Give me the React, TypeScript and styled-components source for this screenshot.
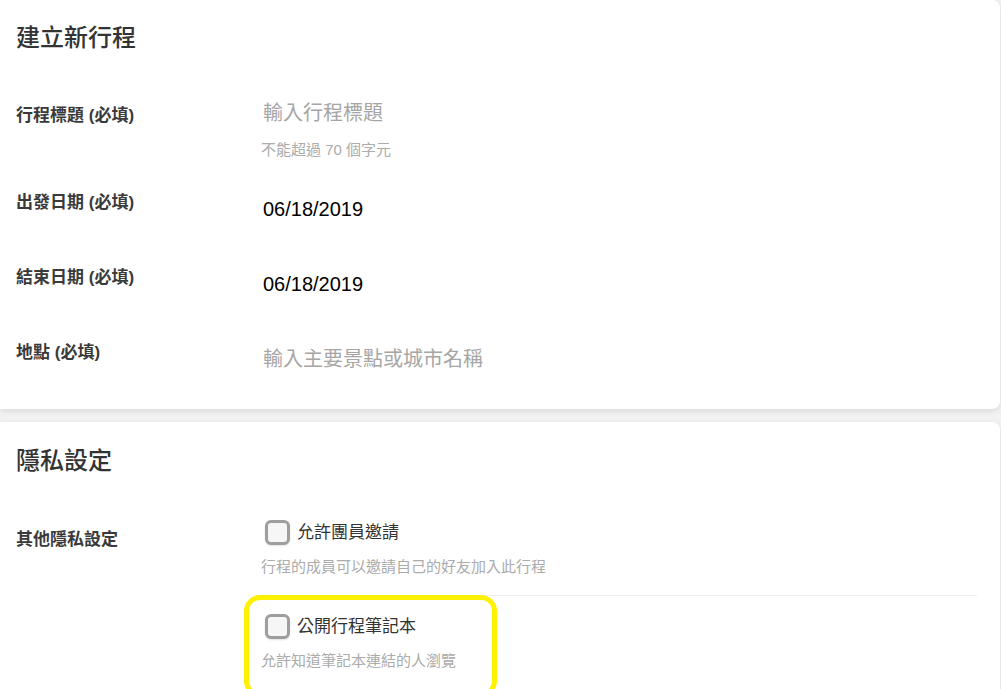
import styled, { createGlobalStyle } from 'styled-components';

const GlobalStyle = createGlobalStyle`
  html, body {
    margin: 0;
    padding: 0;
    background: #f2f2f2;
  }
  * {
    box-sizing: border-box;
  }
`;

const FONT = `"Liberation Sans", "Noto Sans CJK TC", Arial, sans-serif`;

type Field = {
  label: string;
  value: string;
  placeholder?: boolean;
  hint?: string;
  first?: boolean;
};

const fields: Field[] = [
  { label: '行程標題 (必填)', value: '輸入行程標題', placeholder: true, hint: '不能超過 70 個字元', first: true },
  { label: '出發日期 (必填)', value: '06/18/2019' },
  { label: '結束日期 (必填)', value: '06/18/2019' },
  { label: '地點 (必填)', value: '輸入主要景點或城市名稱', placeholder: true },
];

const privacyOptions = [
  { title: '允許團員邀請', desc: '行程的成員可以邀請自己的好友加入此行程', highlight: false },
  { title: '公開行程筆記本', desc: '允許知道筆記本連結的人瀏覽', highlight: true },
];

export default function App() {
  return (
    <Page>
      <GlobalStyle />
      {/* 基本資料 */}
      <Card>
        <CardTitle>建立新行程</CardTitle>
        {fields.map((f) => (
          <FormRow key={f.label} $first={f.first}>
            <Label>{f.label}</Label>
            <ValueCell $first={f.first}>
              <InputText $placeholder={f.placeholder}>{f.value}</InputText>
              {f.hint && <Hint>{f.hint}</Hint>}
            </ValueCell>
          </FormRow>
        ))}
      </Card>

      {/* 隱私設定 */}
      <Card $gap>
        <CardTitle $tight>隱私設定</CardTitle>
        <FormRow>
          <Label $offset>其他隱私設定</Label>
          <OptionList>
            {privacyOptions.map((o) => (
              <Option key={o.title} $highlight={o.highlight}>
                <OptionHead>
                  <Checkbox />
                  <OptionTitle>{o.title}</OptionTitle>
                </OptionHead>
                <Hint $small>{o.desc}</Hint>
              </Option>
            ))}
          </OptionList>
        </FormRow>
      </Card>
    </Page>
  );
}

const Page = styled.div`
  width: 100%;
  min-height: 100vh;
  padding-right: 1px;
  font-family: ${FONT};
`;

const Card = styled.section<{ $gap?: boolean }>`
  background: #ffffff;
  border-radius: 0 8px 8px 0;
  box-shadow: 0 2px 6px rgba(0, 0, 0, 0.1);
  padding: ${({ $gap }) => ($gap ? '23px 23px 40px 16px' : '22px 23px 1px 16px')};
  margin-top: ${({ $gap }) => ($gap ? '13px' : '0')};
`;

const CardTitle = styled.h2<{ $tight?: boolean }>`
  margin: 0 0 ${({ $tight }) => ($tight ? '25px' : '42px')};
  font-size: 24px;
  line-height: 32px;
  font-weight: 500;
  color: #333333;
`;

const FormRow = styled.div<{ $first?: boolean }>`
  display: grid;
  grid-template-columns: 245px 1fr;
  min-height: ${({ $first }) => ($first ? '87px' : '75px')};
`;

const Label = styled.div<{ $offset?: boolean }>`
  padding-top: ${({ $offset }) => ($offset ? '26px' : '8px')};
  font-size: 17px;
  line-height: 24px;
  font-weight: 700;
  color: #3a3a3a;
`;

const ValueCell = styled.div<{ $first?: boolean }>`
  padding-top: ${({ $first }) => ($first ? '3px' : '12px')};
  display: flex;
  flex-direction: column;
`;

const InputText = styled.div<{ $placeholder?: boolean }>`
  padding-left: 2px;
  font-size: 20px;
  line-height: 28px;
  color: ${({ $placeholder }) => ($placeholder ? '#a6a6a6' : '#000000')};
`;

const Hint = styled.div<{ $small?: boolean }>`
  margin-top: ${({ $small }) => ($small ? '12px' : '13px')};
  font-size: 15px;
  line-height: 20px;
  color: #ababab;
`;

const OptionList = styled.div`
  display: flex;
  flex-direction: column;
`;

const Option = styled.div<{ $highlight?: boolean }>`
  position: relative;
  padding: 18px 0;
  border-bottom: 1px solid #eeeeee;

  &:last-child {
    border-bottom: none;
  }

  ${({ $highlight }) =>
    $highlight &&
    `
    &::after {
      content: '';
      position: absolute;
      left: -17px;
      top: -1px;
      width: 243px;
      height: 92px;
      border: 5px solid #fff200;
      border-radius: 16px;
      pointer-events: none;
    }
  `}
`;

const OptionHead = styled.div`
  display: flex;
  align-items: center;
  gap: 7px;
`;

const Checkbox = styled.span`
  flex: none;
  margin-left: 4px;
  width: 25px;
  height: 25px;
  border: 3px solid #9e9e9e;
  border-radius: 6px;
  background: #f6f6f6;
  box-shadow: 0 1px 2px rgba(0, 0, 0, 0.12);
`;

const OptionTitle = styled.span`
  font-size: 17px;
  line-height: 24px;
  font-weight: 400;
  color: #333333;
`;
